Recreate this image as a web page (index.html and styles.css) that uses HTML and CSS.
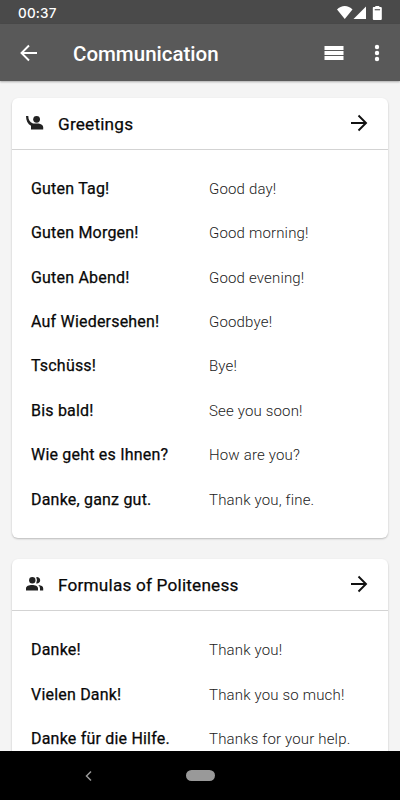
FILE: index.html
```
<!DOCTYPE html>
<html lang="en">
<head>
<meta charset="utf-8">
<title>Communication</title>
<link rel="stylesheet" href="styles.css">
</head>
<body>
<div class="screen">
  <div class="status">
    <span class="clock">00:37</span>
    <svg class="status-icons" width="48" height="16" viewBox="0 0 48 16" fill="#fff">
      <path d="M1 4.500C5-.2 12.500-.2 16.500 4.500L8.750 14z"/>
      <path d="M30 1.500V14H17.500z"/>
      <path d="M37.500 2H39.300V1h4v1h1.500q1 0 1 1V14q0 1-1 1h-7q-1 0-1-1V3q0-1 .7-1z"/>
      <path fill="#4a4a4a" d="M38.700 4.200h5.400v1.100h-5.400z"/>
    </svg>
  </div>
  <header class="appbar">
    <svg class="back" width="18" height="18" viewBox="0 0 18 18" fill="none" stroke="#fff" stroke-width="1.900"><path d="M17 9H2M9 1.500L1.500 9L9 16.500"/></svg>
    <h1>Communication</h1>
    <svg class="list" width="20" height="16" viewBox="0 0 20 16" fill="#fff"><path d="M.5 1h19v4H.5zM.5 6h19v4H.5zM.5 11h19v4H.5z"/></svg>
    <svg class="more" width="6" height="18" viewBox="0 0 6 18" fill="#fff"><circle cx="3" cy="3" r="2.200"/><circle cx="3" cy="9" r="2.200"/><circle cx="3" cy="15" r="2.200"/></svg>
  </header>
  <main class="content">
    <section class="card">
      <div class="card-head">
        <svg class="topic" width="18" height="16" viewBox="0 0 18 16" fill="#222"><circle cx="10.600" cy="4.300" r="3.400"/><path d="M0 1h2.300C2.300 4.500 3.600 7.200 7 8.500H12.500C15 9.100 17.200 10.100 17.200 12V14.500H5V10.800C1.800 9 0 5.500 0 1z"/></svg>
        <h2>Greetings</h2>
        <svg class="go" width="18" height="18" viewBox="0 0 18 18" fill="none" stroke="#111" stroke-width="1.900"><path d="M1 9H16M8.500 1.500L16 9L8.500 16.500"/></svg>
      </div>
      <dl class="phrases">
        <dt>Guten Tag!</dt><dd>Good day!</dd>
        <dt>Guten Morgen!</dt><dd>Good morning!</dd>
        <dt>Guten Abend!</dt><dd>Good evening!</dd>
        <dt>Auf Wiedersehen!</dt><dd>Goodbye!</dd>
        <dt>Tschüss!</dt><dd>Bye!</dd>
        <dt>Bis bald!</dt><dd>See you soon!</dd>
        <dt>Wie geht es Ihnen?</dt><dd>How are you?</dd>
        <dt>Danke, ganz gut.</dt><dd>Thank you, fine.</dd>
      </dl>
    </section>
    <section class="card">
      <div class="card-head">
        <svg class="topic" width="18" height="16" viewBox="0 0 18 16" fill="#222"><circle cx="6.300" cy="4.300" r="3.200"/><path d="M0 14.500V12.300C0 7.800 12 7.800 12 12.300V14.500zM10.200 1.200A3.200 3.200 0 1 1 10.200 7.400Q11.900 4.300 10.200 1.200zM12.300 9C15.500 9.400 17.200 10.500 17.200 12.300V14.500H14V12.300Q14 10.300 12.300 9z"/></svg>
        <h2>Formulas of Politeness</h2>
        <svg class="go" width="18" height="18" viewBox="0 0 18 18" fill="none" stroke="#111" stroke-width="1.900"><path d="M1 9H16M8.500 1.500L16 9L8.500 16.500"/></svg>
      </div>
      <dl class="phrases">
        <dt>Danke!</dt><dd>Thank you!</dd>
        <dt>Vielen Dank!</dt><dd>Thank you so much!</dd>
        <dt>Danke für die Hilfe.</dt><dd>Thanks for your help.</dd>
      </dl>
    </section>
  </main>
  <nav class="navbar">
    <svg class="nav-back" width="8" height="12" viewBox="0 0 8 12" fill="none" stroke="#999" stroke-width="1.500"><path d="M6 1.500L1.500 6L6 10.500"/></svg>
    <span class="pill"></span>
  </nav>
</div>
</body>
</html>
```

FILE: styles.css
```
* { box-sizing: border-box; margin: 0; padding: 0; }
body { font-family: Roboto, sans-serif; background: #f4f4f4; color: #080808; }
svg { display: block; flex: none; }
.screen { width: 400px; height: 800px; display: flex; flex-direction: column; overflow: hidden; }
.status { flex: none; height: 24px; background: #4a4a4a; display: flex; align-items: center; justify-content: space-between; padding: 2px 16px 0 18px; }
.clock { font: 500 13.500px/20px Inter, sans-serif; color: #fff; letter-spacing: .2px; }
.status-icons { margin-top: -1px; }
.appbar { flex: none; height: 57px; background: #595959; display: flex; align-items: center; padding: 1px 20px 0 20px; position: relative; box-shadow: 0 1px 2px rgba(0, 0, 0, .3); }
.appbar svg { margin-top: -1px; }
.appbar h1 { flex: 1; margin-left: 35px; padding-top: 1px; font-size: 20.500px; line-height: 28px; font-weight: 480; color: #fff; }
.appbar .list { margin-right: 30px; }
.appbar .more { margin-right: 0; }
.content { flex: 1; min-height: 0; overflow: hidden; padding: 17px 12px 0; }
.card { background: #fff; border-radius: 6px; box-shadow: 0 1px 2px rgba(0, 0, 0, .24); margin-bottom: 21px; }
.card-head { height: 52px; border-bottom: 1px solid #d3d3d3; display: flex; align-items: center; padding: 0 20px 0 14px; }
.card-head svg { margin-top: -1px; }
.card-head h2 { flex: 1; margin-left: 14px; font-size: 17.200px; line-height: 24px; font-weight: 400; letter-spacing: .2px; -webkit-text-stroke: .25px #080808; }
.phrases { display: grid; grid-template-columns: 178px 1fr; grid-auto-rows: 44.430px; align-items: center; padding: 16.500px 0 16.500px 19px; }
.phrases dt { font-size: 16px; line-height: 22px; font-weight: 400; letter-spacing: .2px; -webkit-text-stroke: .25px #080808; }
.phrases dd { font-size: 15px; line-height: 22px; font-weight: 300; letter-spacing: .17px; color: #222; }
.navbar { flex: none; height: 49px; background: #000; display: flex; align-items: center; padding-left: 85px; }
.pill { width: 29px; height: 11px; border-radius: 6px; background: #999; margin-left: 93px; }
```
